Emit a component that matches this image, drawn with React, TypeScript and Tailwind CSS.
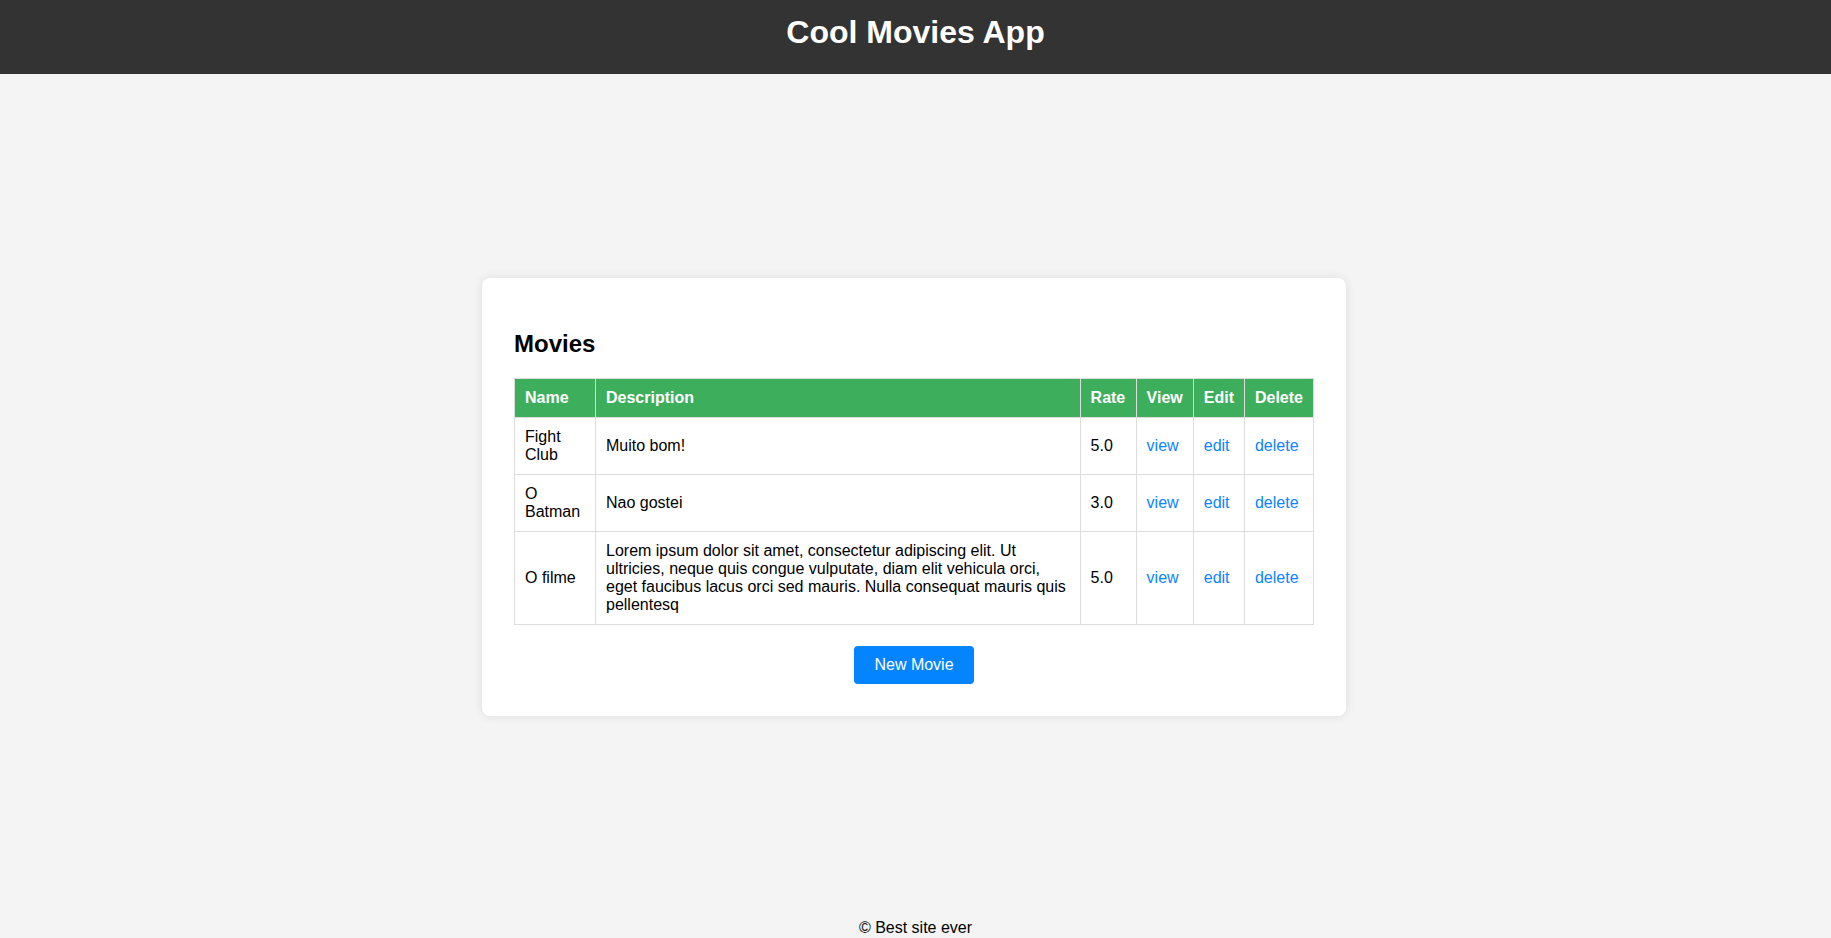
import React from "react";

const movies = [
  { name: "Fight Club", desc: "Muito bom!", rate: "5.0" },
  { name: "O Batman", desc: "Nao gostei", rate: "3.0" },
  {
    name: "O filme",
    desc: "Lorem ipsum dolor sit amet, consectetur adipiscing elit. Ut ultricies, neque quis congue vulputate, diam elit vehicula orci, eget faucibus lacus orci sed mauris. Nulla consequat mauris quis pellentesq",
    rate: "5.0",
  },
];

export default function App() {
  return (
    <div className="bg-[#f4f4f4] text-black leading-[normal]" style={{ fontFamily: '"Liberation Sans", Arial, sans-serif' }}>
      <header className="h-[74px] bg-[#333333] text-white text-center pt-[14px]">
        <h1 className="text-[32px] font-bold leading-[normal]">Cool Movies App</h1>
      </header>
      <main className="h-[845px] flex items-center justify-center">
        <div className="w-[864px] bg-white rounded-lg shadow-[0_0_10px_rgba(0,0,0,0.1)] p-8 mr-[3px]">
          <h2 className="text-2xl font-bold leading-[normal] mt-[20px] mb-[20px]">Movies</h2>
          <table className="w-full border-collapse text-base leading-[normal]">
            <thead>
              <tr className="bg-[#3dae5c] text-white">
                <th className="border border-[#dddddd] p-[10px] text-left font-bold w-[81px]">Name</th>
                <th className="border border-[#dddddd] p-[10px] text-left font-bold">Description</th>
                <th className="border border-[#dddddd] p-[10px] text-left font-bold w-[56px]">Rate</th>
                <th className="border border-[#dddddd] p-[10px] text-left font-bold w-[57px]">View</th>
                <th className="border border-[#dddddd] p-[10px] text-left font-bold w-[51px]">Edit</th>
                <th className="border border-[#dddddd] p-[10px] text-left font-bold w-[69px]">Delete</th>
              </tr>
            </thead>
            <tbody>
              {movies.map((m) => (
                <tr key={m.name}>
                  <td className="border border-[#dddddd] p-[10px]">{m.name}</td>
                  <td className="border border-[#dddddd] p-[10px]">{m.desc}</td>
                  <td className="border border-[#dddddd] p-[10px]">{m.rate}</td>
                  <td className="border border-[#dddddd] p-[10px]">
                    <a className="text-[#0a84ff]" href="#">view</a>
                  </td>
                  <td className="border border-[#dddddd] p-[10px]">
                    <a className="text-[#0a84ff]" href="#">edit</a>
                  </td>
                  <td className="border border-[#dddddd] p-[10px]">
                    <a className="text-[#0a84ff]" href="#">delete</a>
                  </td>
                </tr>
              ))}
            </tbody>
          </table>
          <div className="flex justify-center mt-[21px]">
            <button className="bg-[#0484ff] text-white text-base leading-[normal] px-5 py-[10px] rounded">New Movie</button>
          </div>
        </div>
      </main>
      <footer className="text-center text-base leading-[normal] pb-4">© Best site ever</footer>
    </div>
  );
}
